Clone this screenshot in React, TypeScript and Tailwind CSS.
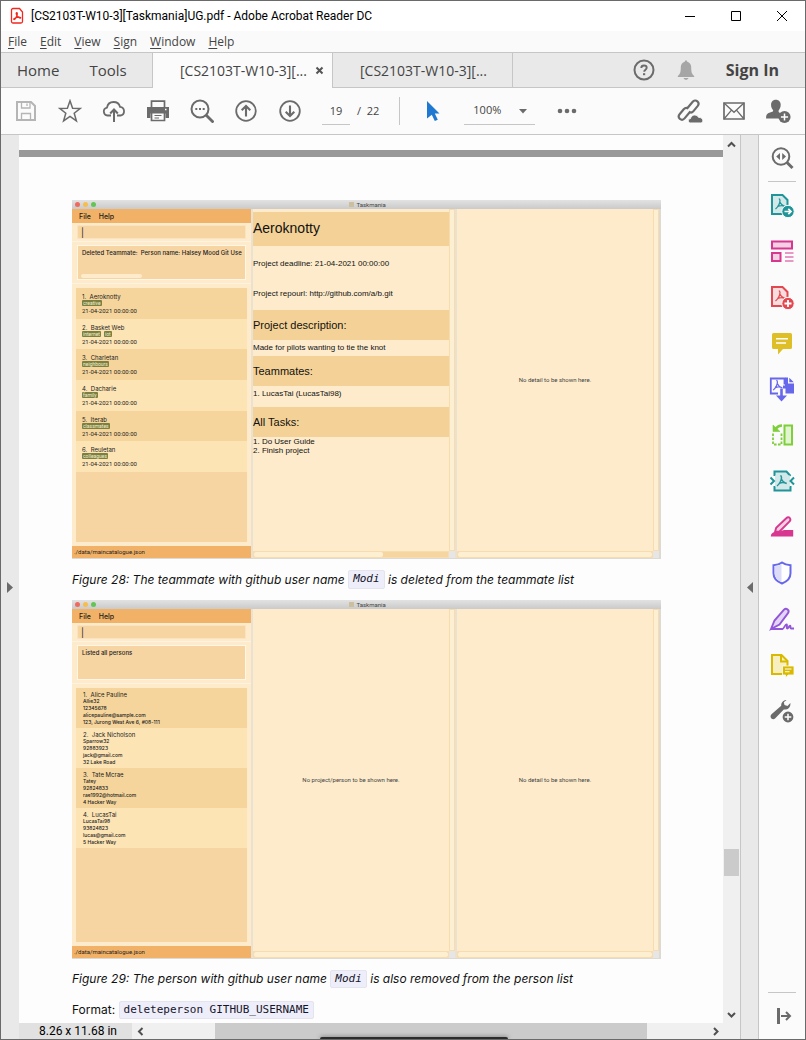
import React from "react";

type Kids = { children?: React.ReactNode };

/* ---------- shared drawing helpers ---------- */

function Svg({ size = 24, children }: Kids & { size?: number }) {
  return (
    <svg width={size} height={size} viewBox="0 0 24 24" fill="none" stroke="currentColor" strokeWidth="2" aria-hidden="true">
      {children}
    </svg>
  );
}

const acrobatMark =
  "M10.300 7.300c1.500 0 1.600 2.700.2 5.700-.8 1.700-1.900 3.300-3.500 4.500M11.300 10.500c1 2.200 2.700 3.800 5.200 4.600M9.300 14.800c2-.8 4.700-1 7.400.2";

function IconButton({ label, children, className = "w-11 text-[#6b6b6b]" }: Kids & { label: string; className?: string }) {
  return (
    <button type="button" aria-label={label} className={`flex h-full shrink-0 items-center justify-center ${className}`}>
      {children}
    </button>
  );
}

/* ---------- window chrome ---------- */

function TitleBar() {
  return (
    <header className="flex h-[30px] items-center bg-white pl-2 font-['Roboto',sans-serif] text-xs text-black">
      <svg width="16" height="18" viewBox="0 0 16 18" fill="none" stroke="#f0281e" aria-hidden="true">
        <path d="M4 1.500h6.500l3 3.500v9.500a1.500 1.500 0 0 1-1.500 1.500H4a1.500 1.500 0 0 1-1.500-1.500V3A1.500 1.500 0 0 1 4 1.500z" strokeWidth="1.300" />
        <path d="M7.700 5.500c-.9.100-.5 2 .3 3.200.8 1.200 1.900 2.200 3 2.500 1 .2 1.200-.7.2-.9-1.300-.3-3 0-4.300.4-1.500.5-2.400 1.200-2.100 1.800.3.500 1.300-.3 2-1.600.7-1.300 1.400-2.600 1.500-3.700.1-1 0-1.700-.6-1.700z" strokeWidth="1.200" />
      </svg>
      <h1 className="ml-[6px] flex-1 truncate">[CS2103T-W10-3][Taskmania]UG.pdf - Adobe Acrobat Reader DC</h1>
      <div className="flex h-full">
        <IconButton label="Minimize" className="w-[46px]">
          <svg width="12" height="12" stroke="#000"><path d="M1 6.500h10" /></svg>
        </IconButton>
        <IconButton label="Maximize" className="w-[46px]">
          <svg width="12" height="12" stroke="#000" fill="none"><path d="M1.500 1.500h9v9h-9z" /></svg>
        </IconButton>
        <IconButton label="Close" className="w-[46px]">
          <svg width="12" height="12" stroke="#000"><path d="M1 1l10 10M11 1L1 11" /></svg>
        </IconButton>
      </div>
    </header>
  );
}

const menus = ["File", "Edit", "View", "Sign", "Window", "Help"];

function MenuBar() {
  return (
    <nav className="flex h-[21px] items-center gap-[13px] bg-[#fafafa] pl-[7px] text-xs text-[#444]">
      {menus.map((m) => (
        <button type="button" key={m}>
          <span className="underline underline-offset-2">{m[0]}</span>
          {m.slice(1)}
        </button>
      ))}
    </nav>
  );
}

function TabBar() {
  return (
    <nav className="flex h-9 items-stretch border-t border-[#c6c6c6] bg-[#e9e9e9] text-[#444]">
      <div className="flex w-[151px] shrink-0 items-center gap-[30px] border-b border-[#c6c6c6] pl-4 text-[15px]">
        <button type="button">Home</button>
        <button type="button">Tools</button>
      </div>
      <div className="flex w-[181px] shrink-0 items-center justify-between border-x border-[#c6c6c6] bg-[#fbfbfb] pr-2 pl-[27px] text-sm">
        <button type="button">[CS2103T-W10-3][...</button>
        <button type="button" aria-label="Close tab">
          <svg width="9" height="9" stroke="#555" strokeWidth="2"><path d="M1.500 1.500l6 6M7.500 1.500l-6 6" /></svg>
        </button>
      </div>
      <div className="flex w-[180px] shrink-0 items-center border-r border-b border-[#c6c6c6] pt-px pl-[27px] text-sm">
        <button type="button">[CS2103T-W10-3][...</button>
      </div>
      <div className="flex flex-1 items-center justify-end border-b border-[#c6c6c6] pr-[26px]">
        <IconButton label="Help" className="w-[42px] text-[#6b6b6b]">
          <Svg>
            <circle cx="12" cy="12" r="9.500" />
            <path d="M9.300 10c0-1.700 1.200-2.500 2.700-2.500s2.700.9 2.700 2.300c0 1.900-2.500 1.900-2.500 4" strokeWidth="1.900" />
            <path d="M12.100 15.200v2" strokeWidth="2.200" />
          </Svg>
        </IconButton>
        <IconButton label="Notifications" className="w-[42px] text-[#a6a6a6]">
          <Svg>
            <path d="M12 2.500c.8 0 1.200.5 1.200 1.200 2.500.6 4 2.700 4 5.300 0 5 .6 7 3 9v1H3.800v-1c2.400-2 3-4 3-9 0-2.600 1.500-4.700 4-5.300 0-.7.4-1.200 1.200-1.200zM9.500 20h5c-.4 1.200-1.300 1.800-2.500 1.800S9.900 21.200 9.500 20z" fill="currentColor" stroke="none" />
          </Svg>
        </IconButton>
        <button type="button" className="ml-[19px] text-base font-bold">Sign In</button>
      </div>
    </nav>
  );
}

function Toolbar() {
  return (
    <div className="flex h-[47px] items-center border-b border-[#c6c6c6] bg-[#fbfbfb] pr-[5px] pl-[3px] text-[11px] text-[#444]">
      <IconButton label="Save" className="w-11 text-[#b5b5b5]">
        <Svg>
          <path d="M3 3h14l4 4v14H3z" />
          <path d="M7.500 3v6h8.500V3M13 4.500v2.500M7.500 21v-6.500h9V21" strokeWidth="1.300" />
        </Svg>
      </IconButton>
      <IconButton label="Bookmark">
        <Svg><path d="M12 1.800l2.600 7.400 7.800.2-6.200 4.800 2.200 7.600L12 17.300l-6.400 4.500 2.200-7.600-6.200-4.800 7.800-.2z" strokeWidth="1.500" /></Svg>
      </IconButton>
      <IconButton label="Upload">
        <Svg>
          <path d="M9 16.500H5.500A4 4 0 0 1 5 8.600C5.600 5.200 8.300 3 11.500 3c3.200 0 5.700 1.900 6.500 4.800a4.400 4.400 0 0 1 .5 8.700H15" strokeWidth="1.800" />
          <path d="M12 23V11.500M8.200 14.500l3.800-4 3.800 4" />
        </Svg>
      </IconButton>
      <IconButton label="Print">
        <Svg>
          <path d="M5.500 8V2.200h13V8" strokeWidth="1.700" />
          <path d="M1 8h22v11h-3.500v-4.500h-15V19H1z" fill="currentColor" stroke="none" />
          <path d="M5.500 14v7.500h13V14" strokeWidth="1.700" />
          <path d="M8.500 16.500h7M8.500 19h4.500" strokeWidth="1.200" />
          <path d="M19 10.500h1.500" stroke="#fff" strokeWidth="1.300" />
        </Svg>
      </IconButton>
      <IconButton label="Find">
        <Svg>
          <circle cx="10" cy="10" r="8.500" />
          <path d="M16 16l7.500 7.500" strokeWidth="2.800" />
          <path d="M5.300 10h2m1.700 0h2m1.700 0h2" />
        </Svg>
      </IconButton>
      <IconButton label="Previous page">
        <Svg>
          <circle cx="12" cy="12" r="9.800" strokeWidth="1.800" />
          <path d="M12 17.500V8M7.700 11.300L12 7l4.300 4.300" strokeWidth="2.100" />
        </Svg>
      </IconButton>
      <IconButton label="Next page">
        <Svg>
          <circle cx="12" cy="12" r="9.800" strokeWidth="1.800" />
          <path d="M12 6.500V16M7.700 12.700L12 17l4.300-4.300" strokeWidth="2.100" />
        </Svg>
      </IconButton>
      <div className="ml-[10px] flex items-center gap-[7px]">
        <input aria-label="Page number" defaultValue="19" className="h-[27px] w-7 border-b border-[#c6c6c6] bg-transparent text-center outline-none" />
        <span>/&nbsp; 22</span>
      </div>
      <div className="ml-5 h-7 w-px bg-[#c6c6c6]" />
      <IconButton label="Select" className="ml-3 w-11 text-[#1f78d1]">
        <Svg><path d="M5 2l12.500 12.500h-4.700l3 6.200-3 1.400-3-6.300L5 19.500z" fill="currentColor" stroke="none" /></Svg>
      </IconButton>
      <div className="relative ml-2 border-b border-[#c6c6c6]">
        <select aria-label="Zoom" defaultValue="100%" className="h-[26px] w-[71px] appearance-none bg-transparent pl-[9px] outline-none">
          <option>100%</option>
        </select>
        <svg className="pointer-events-none absolute top-[11px] right-2" width="8" height="5" fill="#6b6b6b"><path d="M0 0h8L4 4.500z" /></svg>
      </div>
      <IconButton label="More tools" className="ml-[10px] w-11 text-[#6b6b6b]">
        <svg width="20" height="6" fill="currentColor"><circle cx="3" cy="3" r="2.300" /><circle cx="10" cy="3" r="2.300" /><circle cx="17" cy="3" r="2.300" /></svg>
      </IconButton>
      <div className="flex h-full flex-1 justify-end">
        <IconButton label="Share link">
          <Svg size={26}>
            <path d="M9.500 9.500l4.800-5.800c1.300-1.500 3.300-1.600 4.500-.6 1.300 1.100 1.300 3 .2 4.400l-3.800 4.600c-1.200 1.400-3 1.500-4.300.5M12.300 12.500l-5.300 6.300c-1.200 1.400-3 1.500-4.300.5-1.300-1.100-1.400-2.900-.3-4.300l3.800-4.600c1.200-1.300 3-1.500 4.300-.5" />
            <path d="M12.500 23c-1.300 0-2-.9-2-2 0-1.200.9-2 2-2 .3-2 1.900-3.300 3.800-3.300 1.600 0 2.900.8 3.600 2.200 2-.2 3.900 1.100 3.900 3 0 1.200-.9 2.100-2 2.100z" fill="currentColor" stroke="#fbfbfb" strokeWidth=".8" />
          </Svg>
        </IconButton>
        <IconButton label="Email">
          <Svg>
            <path d="M2 4h20v16H2z" strokeWidth="1.700" />
            <path d="M2 4l10 9.300L22 4M2 20l7.500-8.800M22 20l-7.500-8.800" strokeWidth="1.300" />
          </Svg>
        </IconButton>
        <IconButton label="Add people">
          <Svg size={26}>
            <path d="M10 1.500c2.800 0 4.500 2 4.500 4.800 0 2.400-.9 4-1.900 5.200-.3.900 0 1.600.8 2l2 .9c-1.300 1.200-1.900 2.700-1.800 4.600H1c0-3.500.9-4.600 3-5.300l2.700-1c.8-.4 1-.9.700-1.600-1.100-1.200-1.800-2.700-1.800-4.900C5.600 3.500 7.200 1.500 10 1.500z" fill="currentColor" stroke="none" />
            <circle cx="18" cy="17.500" r="5.600" fill="currentColor" stroke="none" />
            <path d="M18 14.200v6.600M14.700 17.500h6.600" stroke="#fff" strokeWidth="1.400" />
          </Svg>
        </IconButton>
      </div>
    </div>
  );
}

/* ---------- tool pane ---------- */

function PdfSheet({ tint }: { tint: string }) {
  return (
    <>
      <path d="M2 2h10.500l5 5v14H2z" fill={tint} strokeWidth="2" />
      <g transform="translate(-1.500 -1.500)"><path d={acrobatMark} strokeWidth="1.300" /></g>
    </>
  );
}

const tools: { label: string; color: string; art: React.ReactNode }[] = [
  {
    label: "Export PDF", color: "text-[#1f9499]",
    art: (<><PdfSheet tint="#d3e8e8" /><circle cx="18" cy="18.500" r="6.200" fill="currentColor" stroke="#fbfbfb" strokeWidth="1" /><path d="M14.500 18.500h6M18.300 15.800l2.700 2.700-2.700 2.700" stroke="#fff" strokeWidth="1.700" /></>),
  },
  {
    label: "Organize pages", color: "text-[#d83790]",
    art: (<><path d="M2 2.500h20v7H2zM2 14h8.500v8H2z" fill="#f5d0e4" /><path d="M15 14h8.500M15 18h8.500M15 22h8.500" strokeWidth="1.200" /></>),
  },
  {
    label: "Create PDF", color: "text-[#e34850]",
    art: (<><PdfSheet tint="#f9dcdd" /><circle cx="18" cy="18.500" r="6.200" fill="currentColor" stroke="#fbfbfb" strokeWidth="1" /><path d="M14.500 18.500h7M18 15v7" stroke="#fff" strokeWidth="1.800" /></>),
  },
  {
    label: "Comment", color: "text-[#dfbf28]",
    art: (<><path d="M3.500 2h17A1.500 1.500 0 0 1 22 3.500v13a1.500 1.500 0 0 1-1.500 1.500H13l-5 5.500V18H3.500A1.500 1.500 0 0 1 2 16.500v-13A1.500 1.500 0 0 1 3.500 2z" fill="currentColor" stroke="none" /><path d="M6 7.700h12M6 12h10" stroke="#fff" strokeWidth="1.500" /></>),
  },
  {
    label: "Combine files", color: "text-[#6767ec]",
    art: (<><path d="M8 16.500H.8V1.500h13.700v6" strokeWidth="1.800" /><g transform="translate(-3.500 -3.500) scale(.95)"><path d={acrobatMark} strokeWidth="1.300" /></g><path d="M15 .6h3v6h6v10h-8.500v-5H13V8.500h2zM19.300.8l4.500 4.500h-4.500z" fill="currentColor" stroke="none" /><path d="M11.500 11.500v8" strokeWidth="2.600" /><path d="M6 18.500h11L11.500 24.500z" fill="currentColor" stroke="none" /></>),
  },
  {
    label: "Edit pages", color: "text-[#7ecf3a]",
    art: (<><path d="M14.500 2.500H22v19h-7.500z" fill="#e2f5d2" /><path d="M3 10.500v11h8.500v-11" strokeDasharray="2.600 1.400" strokeWidth="1.800" /><path d="M12 2.500C9 2.500 7.500 3.500 6 5.500" strokeWidth="2.400" /><path d="M3 2v6.500h7z" fill="currentColor" strokeWidth=".6" /></>),
  },
  {
    label: "Compress PDF", color: "text-[#1f9499]",
    art: (<><path d="M4.500 7v-4.500h12L20.500 7M4.500 17v4.500h16V17" fill="#d3e8e8" /><path d="M5 6.500h15v11H5z" fill="#d3e8e8" stroke="none" /><g transform="translate(0 -.5)"><path d={acrobatMark} strokeWidth="1.500" /></g><path d="M.5 8.500L4 12l-3.500 3.500M24 8.500L20.500 12l3.500 3.500" /></>),
  },
  {
    label: "Redact", color: "text-[#d83790]",
    art: (<><path d="M5 17l1.200-4.200L16.500 3c1-1 2.500-1 3.300 0s.7 2.300-.2 3.300L9.500 16.500z" fill="#f5d0e4" strokeWidth="1.900" /><path d="M.8 21.500c0-2.500 1.500-4 4.200-4.500l4.500-.5L14 15h9.200v6.500z" fill="currentColor" stroke="none" /></>),
  },
  {
    label: "Protect", color: "text-[#6767ec]",
    art: (<><path d="M12 1.500c2.500 2 5 2.600 8.500 2.700v8c0 5-3.500 8.300-8.500 10.300-5-2-8.500-5.300-8.500-10.300v-8C7 4.100 9.500 3.500 12 1.500z" fill="#fff" /><path d="M11.500 3.200C9.500 4.500 7 5 4.700 5.200v7c0 4 2.800 6.900 6.800 8.700z" fill="#dcdcf8" stroke="none" /></>),
  },
  {
    label: "Fill and sign", color: "text-[#9256d9]",
    art: (<><path d="M1 22l3.500-8.500L14 2.700c1-1 2.500-1.100 3.600-.2 1.200 1 1.300 2.400.4 3.600L9.500 17.500z" fill="#e4d4f6" strokeWidth="1.900" /><path d="M1 22h11.500c1.500-.2 2.500-4.500 4-4.700 1.300 0-.5 4.200.8 4.200 1.200 0 1.600-2.800 2.700-2.800s-.2 2.800 1 2.800H24" strokeWidth="1.800" /></>),
  },
  {
    label: "Send for comments", color: "text-[#d9ba00]",
    art: (<><path d="M2 2h9.500l6 6v13H2z" fill="#f7efc0" /><path d="M11 2v6.500h6.500" /><path d="M12.500 13H24v9h-6l-2.500 3V22h-3z" fill="currentColor" stroke="#fbfbfb" strokeWidth=".8" /><path d="M15 16h6.500M15 18.700h4.500" stroke="#fff" strokeWidth="1.100" /></>),
  },
  {
    label: "More tools", color: "text-[#6b6b6b]",
    art: (<><path d="M16.500 1c-3 0-5.500 2.500-5.300 5.700L1.500 15.300c-1.300 1.400-1.200 3.100-.1 4.100 1.100 1 2.700 1 3.900-.2l8.500-8.700c4 .8 7-2.400 6.600-6.600l-2.900 3-3-.8-.7-2.800z" fill="currentColor" stroke="none" /><circle cx="18" cy="18" r="6.400" fill="currentColor" stroke="#fbfbfb" /><path d="M14.700 18h6.600M18 14.700v6.600" stroke="#fff" strokeWidth="1.500" /></>),
  },
];

function ToolPane() {
  return (
    <aside className="flex w-[47px] shrink-0 flex-col items-center border-l border-[#c6c6c6] bg-[#fbfbfb]">
      <IconButton label="Search tools" className="min-h-[46px] max-h-[46px] w-full text-[#6b6b6b]">
        <Svg>
          <circle cx="11" cy="10.500" r="8.300" />
          <path d="M17 16.500l5.500 5.500" strokeWidth="3" />
          <path d="M10 7v7l-3.800-3.500zM12.200 7v7l3.800-3.500z" fill="currentColor" stroke="none" />
        </Svg>
      </IconButton>
      <div className="h-px w-7 bg-[#c6c6c6]" />
      {tools.map((t) => (
        <button type="button" key={t.label} aria-label={t.label} className={`flex h-[46px] w-full items-center justify-center ${t.color}`}>
          <svg width="24" height="24" viewBox="0 0 24 24" fill="none" stroke="currentColor" strokeWidth="2" className="overflow-visible" aria-hidden="true">{t.art}</svg>
        </button>
      ))}
      <div className="mt-auto h-px w-7 bg-[#c6c6c6]" />
      <button type="button" aria-label="Collapse pane" className="flex h-[46px] w-full items-center justify-center pl-1 text-[#6b6b6b]">
        <svg width="16" height="16" fill="none" stroke="currentColor" strokeWidth="2"><path d="M2.500 0v16" strokeWidth="3" /><path d="M5 8h9M10 4l4 4-4 4" /></svg>
      </button>
    </aside>
  );
}

/* ---------- figures in the document ---------- */

function SideScroll() {
  return (
    <div className="flex w-[6px] shrink-0 flex-col">
      <div className="flex-1 border border-[#f8dcae] bg-[#fdf0d2]" />
      <div className="h-[7px] bg-[#e6e6e6]" />
    </div>
  );
}

function Pane({ children, partial = false }: Kids & { partial?: boolean }) {
  return (
    <section className="flex min-w-0 flex-1 border-l-2 border-[#e9e2d2] bg-[#fdebcb]">
      <div className="flex min-w-0 flex-1 flex-col">
        <div className="flex flex-1 flex-col">{children}</div>
        <div className="flex h-[7px] border border-[#f8dcae] bg-[#f6d5a0]">
          <div className={`h-full rounded-xs bg-[#fdf0d2] ${partial ? "w-2/3" : "w-full"}`} />
        </div>
      </div>
      <SideScroll />
    </section>
  );
}

function EmptyPane({ text }: { text: string }) {
  return (
    <Pane>
      <p className="flex flex-1 items-center justify-center font-['Roboto',sans-serif] text-[6px] text-[#444]">{text}</p>
    </Pane>
  );
}

function AppFigure({ message, list, children, scroll = false, name }: Kids & { message: string; list: React.ReactNode; scroll?: boolean; name: string }) {
  return (
    <div className="flex h-[359px] flex-col font-['Inter',sans-serif] text-[#1c1c1c]">
      <div className="flex h-[9px] shrink-0 items-center bg-linear-to-b from-[#e2e2e2] to-[#cacaca]">
        <div className="flex w-1/2 gap-[3px] pl-[3px]">
          <span className="size-[5px] rounded-full bg-[#ee6a5f]" />
          <span className="size-[5px] rounded-full bg-[#f5be4f]" />
          <span className="size-[5px] rounded-full bg-[#62c655]" />
        </div>
        <span className="-ml-[18px] size-[5px] bg-[#cbbf9f]" />
        <span className="ml-[3px] font-['Roboto',sans-serif] text-[6px] leading-[9px] text-[#444]">Taskmania</span>
      </div>
      <div className="flex min-h-0 flex-1 border-r-2 border-b border-[#dcdad2]">
        <div className="flex w-[179px] shrink-0 flex-col bg-[#fdebcb]">
          <div className="flex h-[14px] items-center gap-2 bg-[#f1b268] pl-[7px] text-[7px] leading-none font-medium">
            <button type="button">File</button>
            <button type="button">Help</button>
          </div>
          <div className="border-b border-[#fef3df] px-[5px] py-[2px]">
            <input aria-label={name} defaultValue="|" className="block h-[14px] w-full border border-[#fbe3bf] bg-[#f6d5a3] pl-[3px] text-[9px] outline-none" />
          </div>
          <div className="border-b border-[#fef3df] px-[5px] py-[3px]">
            <div className="flex h-[35px] flex-col justify-between overflow-hidden border border-[#fff6e6] bg-[#f6d5a3] pt-[2px] pb-px pl-[3px]">
              <p className="pl-px text-[6px] leading-[9px] font-medium whitespace-pre">{message}</p>
              {scroll && <div className="h-1 w-[61px] rounded-xs bg-[#fdebcb]" />}
            </div>
          </div>
          <div className="mx-[4px] mt-1 mb-1 flex flex-1 flex-col bg-[#f6d5a3]">{list}</div>
          <div className="flex h-3 items-center bg-[#f1b268] pl-[2px] font-['Roboto',sans-serif] text-[6px] leading-none">./data/maincatalogue.json</div>
        </div>
        {children}
      </div>
    </div>
  );
}

const projects = [
  { name: "Aeroknotty", tags: ["creative"] },
  { name: "Basket Web", tags: ["internet", "iot"] },
  { name: "Charletan", tags: ["neighbours"] },
  { name: "Dacharie", tags: ["family"] },
  { name: "Iterab", tags: ["classmates"] },
  { name: "Reuletan", tags: ["colleagues"] },
];

const people = [
  { name: "Alice Pauline", lines: ["Allie32", "12345678", "alicepauline@sample.com", "123, Jurong West Ave 6, #08-111"] },
  { name: "Jack Nicholson", lines: ["Sparrow32", "92883923", "jack@gmail.com", "32 Lake Road"] },
  { name: "Tate Mcrae", lines: ["Tatey", "92824833", "rae1992@hotmail.com", "4 Hacker Way"] },
  { name: "LucasTai", lines: ["LucasTai98", "93824823", "lucas@gmail.com", "5 Hacker Way"] },
];

function ProjectList() {
  return (
    <ol className="grid h-[184px] auto-rows-fr text-[6px] leading-[7px]">
      {projects.map((p, i) => (
        <li key={p.name} className="pt-[5px] pl-[6px] odd:bg-[#f5d59c] even:bg-[#fde4b5]">
          <p>{i + 1}.&nbsp; {p.name}</p>
          <p className="flex h-[7px] gap-[3px]">
            {p.tags.map((t) => (
              <span key={t} className="h-[6px] rounded-[1px] bg-[#7b8040] px-px font-['Roboto',sans-serif] text-[5px] leading-[6px] text-[#f3efd0]">{t}</span>
            ))}
          </p>
          <p className="font-['Roboto',sans-serif]">21-04-2021 00:00:00</p>
        </li>
      ))}
    </ol>
  );
}

function PeopleList() {
  return (
    <ol className="text-[6px] leading-[7px]">
      {people.map((p, i) => (
        <li key={p.name} className="pt-[3px] pb-[2px] pl-[7px] odd:bg-[#f5d59c] even:bg-[#fde4b5]">
          <p>{i + 1}.&nbsp; {p.name}</p>
          {p.lines.map((l) => (
            <p key={l} className="text-[5px] font-medium">{l}</p>
          ))}
        </li>
      ))}
    </ol>
  );
}

function ProjectDetail() {
  return (
    <Pane partial>
      <div className="pt-[3px] font-['Liberation_Sans',Arial,sans-serif] text-[8px] leading-[9px] text-[#111]">
        <h3 className="h-[34px] bg-[#f4d196] pt-[7px] text-[14px] leading-[18px]">Aeroknotty</h3>
        <p className="h-[30px] pt-[13px]">Project deadline: 21-04-2021 00:00:00</p>
        <p className="h-[34px] pt-[13px]">Project repourl: http://github.com/a/b.git</p>
        <h4 className="h-[30px] bg-[#f4d196] text-[11px] leading-[30px]">Project description:</h4>
        <p className="h-4 pt-[3px]">Made for pilots wanting to tie the knot</p>
        <h4 className="h-[30px] bg-[#f4d196] text-[11px] leading-[30px]">Teammates:</h4>
        <p className="h-[21px] pt-[3px]">1. LucasTai (LucasTai98)</p>
        <h4 className="h-[30px] bg-[#f4d196] text-[11px] leading-[30px]">All Tasks:</h4>
        <p>1. Do User Guide</p>
        <p>2. Finish project</p>
      </div>
    </Pane>
  );
}

function Code({ children }: Kids) {
  return (
    <code className="rounded-[2px] border border-[#e4e4ee] bg-[#eeeefa] px-1 py-px font-['DejaVu_Sans_Mono',monospace] text-[11px] text-[#15152a]">
      {children}
    </code>
  );
}

function Document() {
  return (
    <main className="flex-1 bg-[#fdfdfd] pt-[15px] font-['Inter',sans-serif] text-xs text-[#111]">
      <div className="mb-[43px] h-[7px] bg-[#999]" />
      <div className="pr-[62px] pl-[53px]">
        <figure>
          <AppFigure name="Command for projects" message="Deleted Teammate:  Person name: Halsey Mood Git Use" scroll list={<ProjectList />}>
            <ProjectDetail />
            <EmptyPane text="No detail to be shown here." />
          </AppFigure>
          <figcaption className="flex h-[41px] items-center whitespace-pre italic">
            Figure 28: The teammate with github user name <Code>Modi</Code> is deleted from the teammate list
          </figcaption>
        </figure>
        <figure>
          <AppFigure name="Command for persons" message="Listed all persons" list={<PeopleList />}>
            <EmptyPane text="No project/person to be shown here." />
            <EmptyPane text="No detail to be shown here." />
          </AppFigure>
          <figcaption className="flex h-10 items-center whitespace-pre italic">
            Figure 29: The person with github user name <Code>Modi</Code> is also removed from the person list
          </figcaption>
        </figure>
        <p className="flex h-[22px] items-center">
          Format:&nbsp;<Code>deleteperson GITHUB_USERNAME</Code>
        </p>
      </div>
    </main>
  );
}

/* ---------- page ---------- */

function Chevron({ d }: { d: string }) {
  return <svg width="9" height="9" fill="none" stroke="#505050" strokeWidth="2"><path d={d} /></svg>;
}

export default function App() {
  return (
    <div className="relative flex min-h-screen flex-col overflow-hidden border border-[#6a6a6a] bg-[#fbfbfb] font-['Open_Sans',sans-serif]">
      <TitleBar />
      <MenuBar />
      <TabBar />
      <Toolbar />
      <div className="flex flex-1">
        <button type="button" aria-label="Open navigation pane" className="flex w-[18px] shrink-0 items-center justify-center bg-[#e9e9e9]">
          <svg width="6" height="11" fill="#6b6b6b"><path d="M0 0l6 5.500L0 11z" /></svg>
        </button>
        <div className="flex min-w-0 flex-1 flex-col">
          <Document />
          <div className="flex h-4 items-center bg-[#f0f0f0] font-['Roboto',sans-serif] text-xs leading-4 text-black">
            <span className="w-[113px] bg-[#e1e1e1] pl-5">8.26 x 11.68 in</span>
            <button type="button" aria-label="Scroll left" className="flex w-4 justify-center"><Chevron d="M6.500 1L3 4.500 6.500 8" /></button>
            <div className="flex h-full flex-1 pr-[60px] pl-[67px]"><div className="flex-1 bg-[#cbcbcb]" /></div>
            <button type="button" aria-label="Scroll right" className="flex w-4 justify-center"><Chevron d="M3 1l3.500 3.500L3 8" /></button>
          </div>
        </div>
        <div className="flex w-[17px] shrink-0 flex-col items-center bg-[#f0f0f0] pb-4">
          <button type="button" aria-label="Scroll up" className="flex h-[18px] w-full items-center justify-center"><Chevron d="M1 6.500L4.500 3 8 6.500" /></button>
          <div className="flex-1" />
          <div className="mb-[129px] h-[27px] w-[15px] bg-[#cbcbcb]" />
          <button type="button" aria-label="Scroll down" className="flex h-[18px] w-full items-center justify-center"><Chevron d="M1 3l3.500 3.500L8 3" /></button>
        </div>
        <button type="button" aria-label="Toggle tool pane" className="flex w-[18px] shrink-0 items-center justify-center border-l border-[#c6c6c6] bg-[#e9e9e9]">
          <svg width="6" height="11" fill="#6b6b6b"><path d="M6 0L0 5.500 6 11z" /></svg>
        </button>
        <ToolPane />
      </div>
      <div className="absolute bottom-0 left-[319px] h-[2px] w-[188px] rounded-t-sm bg-[#2c2c2c] shadow-[0_0_4px_#555]" />
    </div>
  );
}
